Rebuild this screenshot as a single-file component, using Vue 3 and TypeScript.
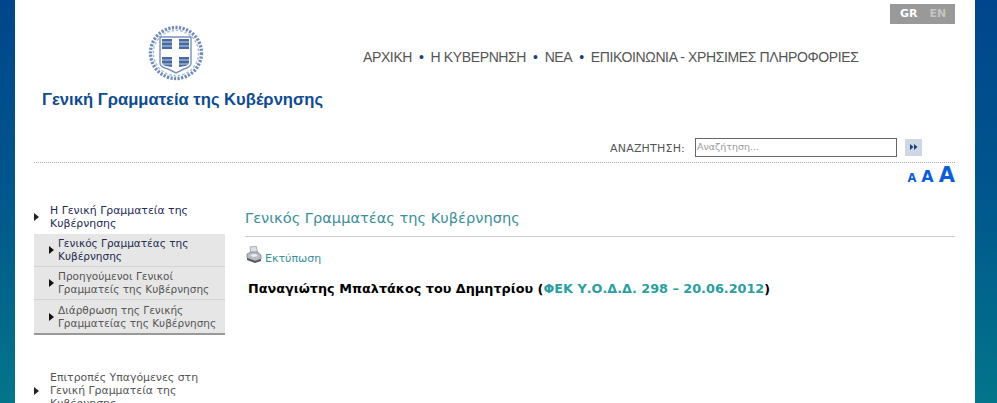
<script setup lang="ts">
const navItems: string[] = ['ΑΡΧΙΚΗ', 'Η ΚΥΒΕΡΝΗΣΗ', 'ΝΕΑ', 'ΕΠΙΚΟΙΝΩΝΙΑ - ΧΡΗΣΙΜΕΣ ΠΛΗΡΟΦΟΡΙΕΣ']
const subItems = [
  { text: 'Γενικός Γραμματέας της Κυβέρνησης', active: true },
  { text: 'Προηγούμενοι Γενικοί Γραμματείς της Κυβέρνησης', active: false },
  { text: 'Διάρθρωση της Γενικής Γραμματείας της Κυβέρνησης', active: false },
]
</script>

<template>
  <div class="page">
    <div class="sheet">
      <header class="top">
        <div class="brand">
          <svg class="crest" width="56" height="56" viewBox="0 0 56 56" aria-hidden="true">
            <circle cx="28" cy="28" r="25.5" fill="none" stroke="#6f8cb8" stroke-width="3.4" stroke-dasharray="2.2 1.4" />
            <circle cx="28" cy="28" r="22.6" fill="none" stroke="#a9bcd8" stroke-width="1.4" stroke-dasharray="2.6 1.8" />
            <path d="M12 12H43V38Q43 42 36 44L28 48L20 44Q12 42 12 38Z" fill="#fff" stroke="#7892bb" stroke-width="1.4" />
            <path d="M14 14H24V24H14ZM31 14H41V24H31ZM14 32H24V42L18 41Q14 40 14 37ZM31 32H41V37Q41 40 37 41L31 42Z" fill="#46699f" />
            <path d="M14 17H24M14 21H24M31 17H41M31 21H41M14 35H24M14 39H24M31 35H41M31 39H41" stroke="#c6d3e6" stroke-width="1" />
          </svg>
          <div class="brand-name">Γενική Γραμματεία της Κυβέρνησης</div>
        </div>
        <div class="top-main">
          <div class="lang"><b class="on">GR</b><b class="off">EN</b></div>
          <nav class="nav">
            <template v-for="(item, i) in navItems" :key="item">
              <span v-if="i > 0" class="dot">•</span>
              <a>{{ item }}</a>
            </template>
          </nav>
          <div class="search">
            <label>ΑΝΑΖΗΤΗΣΗ:</label>
            <div class="field">Αναζήτηση...</div>
            <div class="go">
              <svg width="8" height="6" viewBox="0 0 8 6" aria-hidden="true"><path d="M0 0L3.5 3L0 6ZM4 0L7.5 3L4 6Z" fill="#1d3f78" /></svg>
            </div>
          </div>
        </div>
      </header>

      <div class="sizes"><b class="s1">A</b><b class="s2">A</b><b class="s3">A</b></div>

      <div class="columns">
        <aside class="side">
          <div class="menu-item dark">
            <svg class="arrow" width="5" height="8" viewBox="0 0 5 8" aria-hidden="true"><path d="M0 0L5 4L0 8Z" /></svg>
            <span>Η Γενική Γραμματεία της Κυβέρνησης</span>
          </div>
          <ul class="sub">
            <li v-for="s in subItems" :key="s.text" :class="{ active: s.active }">
              <svg class="arrow" width="5" height="8" viewBox="0 0 5 8" aria-hidden="true"><path d="M0 0L5 4L0 8Z" /></svg>
              <span>{{ s.text }}</span>
            </li>
          </ul>
          <div class="menu-item second">
            <svg class="arrow" width="5" height="8" viewBox="0 0 5 8" aria-hidden="true"><path d="M0 0L5 4L0 8Z" /></svg>
            <span>Επιτροπές Υπαγόμενες στη Γενική Γραμματεία της Κυβέρνησης</span>
          </div>
        </aside>

        <main class="content">
          <h1>Γενικός Γραμματέας της Κυβέρνησης</h1>
          <div class="print">
            <svg width="16" height="17" viewBox="0 0 16 17" aria-hidden="true">
              <path d="M4 1L10 0L12 7L5 8Z" fill="#d9dfe6" stroke="#8b939c" stroke-width=".7" />
              <path d="M1 8L5 6H11L15 9V13L9 15L1 12Z" fill="#b9bec4" stroke="#6f757c" stroke-width=".7" />
              <path d="M1 12L9 15L15 13V15L9 17L1 14Z" fill="#54585d" />
              <path d="M4 9L9 8L12 10L7 11Z" fill="#eef1f4" />
            </svg>
            <a>Εκτύπωση</a>
          </div>
          <p class="person">Παναγιώτης Μπαλτάκος του Δημητρίου (<a>ΦΕΚ Υ.Ο.Δ.Δ. 298 – 20.06.2012</a>)</p>
        </main>
      </div>
    </div>
  </div>
</template>

<style>
html, body {
  margin: 0;
  height: 403px;
  overflow: hidden;
}
</style>

<style scoped>
.page {
  height: 403px;
  overflow: hidden;
  background: linear-gradient(180deg, #00468c 0%, #00558d 45%, #03758a 100%);
  font-family: "DejaVu Sans", Verdana, sans-serif;
}
.sheet {
  box-sizing: border-box;
  width: 960px;
  height: 403px;
  margin-left: 15px;
  padding: 0 20px 0 19px;
  background: #fff;
  overflow: hidden;
}
.top {
  display: flex;
  height: 163px;
  box-sizing: border-box;
  border-bottom: 1px dotted #a8a8a8;
}
.brand {
  width: 316px;
  flex: none;
  padding-top: 25px;
  box-sizing: border-box;
}
.crest {
  display: block;
  margin-left: 114px;
}
.brand-name {
  margin: 9px 0 0 8px;
  font: bold 16.6px/20px "Liberation Sans", Arial, sans-serif;
  color: #0f4c8f;
  white-space: nowrap;
}
.top-main {
  flex: 1;
  display: flex;
  flex-direction: column;
  min-width: 0;
}
.lang {
  align-self: flex-end;
  width: 65px;
  height: 20px;
  margin-top: 4px;
  box-sizing: border-box;
  padding-left: 10px;
  display: flex;
  gap: 12px;
  background: #999;
  font: bold 11px/20px "DejaVu Sans", Verdana, sans-serif;
}
.on { color: #fff; }
.off { color: #c4c4c4; }
.nav {
  display: flex;
  align-items: center;
  margin: 23px 0 0 13px;
  font: 14px/20px "Liberation Sans", Arial, sans-serif;
  letter-spacing: -0.38px;
  color: #555;
  white-space: nowrap;
}
.dot {
  color: #1d3f78;
  margin: 0 7px;
  font-size: 14px;
}
.search {
  display: flex;
  align-items: center;
  margin-top: 70px;
  height: 20px;
  padding-left: 260px;
}
.search label {
  font-size: 11px;
  letter-spacing: 0.2px;
  color: #555;
  width: 85px;
  flex: none;
  padding-top: 3px;
  white-space: nowrap;
}
.field {
  box-sizing: border-box;
  width: 202px;
  height: 19px;
  border: 1px solid #666;
  font: 9.5px/15px "DejaVu Sans", Verdana, sans-serif;
  color: #999;
  padding-left: 1px;
  flex: none;
}
.go {
  width: 17px;
  height: 17px;
  margin-left: 8px;
  background: #cdd8e4;
  display: flex;
  align-items: center;
  justify-content: center;
  flex: none;
}
.sizes {
  display: flex;
  justify-content: flex-end;
  align-items: baseline;
  gap: 5px;
  height: 22px;
  padding-top: 1px;
  color: #0d5fd8;
  line-height: 22px;
}
.s1 { font-size: 11.5px; }
.s2 { font-size: 16px; }
.s3 { font-size: 21px; }
.columns {
  display: flex;
  padding-top: 16px;
}
.side {
  width: 191px;
  flex: none;
  margin-right: 20px;
  font-size: 10.9px;
  line-height: 13px;
  color: #555;
}
.menu-item {
  display: flex;
  align-items: center;
  gap: 11px;
  height: 29px;
}
.menu-item .arrow { flex: none; fill: #222; }
.menu-item.dark {
  color: #1e2a55;
  height: 32px;
  padding-bottom: 3px;
  box-sizing: border-box;
}
.menu-item.second {
  height: 39px;
  margin-top: 36px;
}
.sub {
  list-style: none;
  margin: 0;
  padding: 0;
  background: #e6e6e6;
  border-bottom: 2px solid #999;
  font-size: 10.5px;
  line-height: 13px;
}
.sub li {
  display: flex;
  align-items: center;
  gap: 4px;
  height: 32px;
  padding-left: 15px;
  color: #555;
  border-bottom: 1px solid #d4d4d4;
}
.sub li:last-child {
  border-bottom: 0;
  height: 33px;
}
.sub li.active { color: #222a50; }
.sub .arrow { flex: none; fill: #111; }
.content {
  flex: 1;
  min-width: 0;
}
h1 {
  margin: 0;
  height: 35px;
  box-sizing: border-box;
  padding-top: 6px;
  border-bottom: 1px solid #ccc;
  font-weight: normal;
  font-size: 14.6px;
  line-height: 20px;
  color: #3a8f9a;
  white-space: nowrap;
}
.print {
  display: flex;
  align-items: flex-end;
  gap: 3px;
  margin: 9px 0 0 1px;
  color: #3a8f9a;
  font-size: 11px;
  line-height: 13px;
}
.print a { margin-bottom: -2px; }
.person {
  margin: 18px 0 0 3px;
  font-size: 12.8px;
  line-height: 16px;
  font-weight: bold;
  color: #000;
}
.person a { color: #2a9ea0; }
</style>
